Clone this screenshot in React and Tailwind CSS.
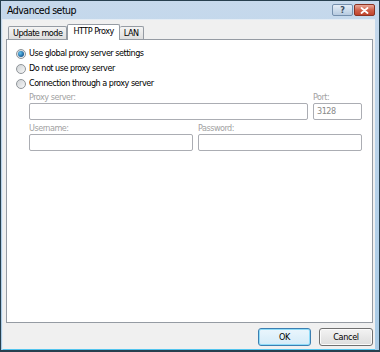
import React from "react";

function Radio({ checked, label }) {
  return (
    <div className="flex items-center h-[15px]">
      <span className="w-[10px] h-[10px] rounded-full border border-[#8f9499] bg-gradient-to-br from-[#cfd3d6] to-[#f7f7f7] flex items-center justify-center">
        {checked && (
          <span className="w-[6px] h-[6px] rounded-full bg-[radial-gradient(circle_at_35%_35%,#63c6f2,#1a5d97_70%)]" />
        )}
      </span>
      <span className="ml-[3px] text-[9px] tracking-[-0.5px] text-black leading-none">{label}</span>
    </div>
  );
}

function Field({ label, value, className }) {
  return (
    <div className={"flex flex-col " + (className || "")}>
      <span className="text-[9px] tracking-[-0.5px] text-[#a2a2a2] leading-[11px] h-[11px]">{label}</span>
      <div className="h-[17px] border border-[#abadb3] bg-white rounded-[2px] text-[9px] tracking-[-0.5px] text-[#8a8a8a] px-[3px] leading-[15px]">
        {value}
      </div>
    </div>
  );
}

export default function App() {
  return (
    <div
      className="w-[380px] h-[352px] bg-[#27404f] pt-[1px] px-[1px] pb-[2px] overflow-hidden"
      style={{ fontFamily: '"DejaVu Sans Condensed", "Liberation Sans", Arial, sans-serif' }}
    >
      <div className="w-full h-full bg-gradient-to-b from-[#c6d9ec] to-[#a9cbe6] flex flex-col pl-[1px] pr-[4px]">
        <div className="h-[18px] flex items-start justify-between pl-[5px]">
          <span className="text-[10.5px] tracking-[-0.5px] text-black leading-[18px]">Advanced setup</span>
          <div className="flex gap-[1px] pt-[3px]">
            <div className="w-[21px] h-[12px] rounded-[2px] border border-[#7590ad] bg-gradient-to-b from-[#e3edf7] to-[#b7cbe0] flex items-center justify-center text-[9px] font-bold text-[#3b4d60] leading-none">
              ?
            </div>
            <div className="w-[21px] h-[12px] rounded-[2px] border border-[#8b3322] bg-gradient-to-b from-[#e9a99a] via-[#d0614a] to-[#c0442c] flex items-center justify-center">
              <svg width="9" height="7" viewBox="0 0 9 7">
                <path d="M1.5 1 L7.5 6 M7.5 1 L1.5 6" stroke="#ffffff" strokeWidth="1.8" strokeLinecap="round" />
              </svg>
            </div>
          </div>
        </div>
        <div className="flex-1 bg-[#f0f0f0] border-l border-t border-[#e4ecf4] border-b border-b-[#52c4ee] flex flex-col pl-[3px] pr-[2px]">
          <div className="flex items-end h-[19px] pl-[2px]">
            <div className="h-[13px] px-[4px] border border-[#959ba3] border-b-0 bg-gradient-to-b from-[#f4f4f4] to-[#dedede] text-[9px] tracking-[-0.5px] leading-[12px] rounded-t-[2px]">
              Update mode
            </div>
            <div className="relative z-10 h-[16px] mb-[-1px] px-[5px] border border-[#959ba3] border-b-0 bg-white text-[9px] tracking-[-0.5px] leading-[13px] rounded-t-[2px]">
              HTTP Proxy
            </div>
            <div className="h-[13px] px-[4px] border border-[#959ba3] border-b-0 border-l-0 bg-gradient-to-b from-[#f4f4f4] to-[#dedede] text-[9px] tracking-[-0.5px] leading-[12px] rounded-t-[2px]">
              LAN
            </div>
          </div>
          <div className="h-[284px] bg-white border border-[#959ba3] flex flex-col pt-[6px] pl-[9px] pr-[10px]">
            <div className="flex flex-col">
              <Radio checked label="Use global proxy server settings" />
              <Radio label="Do not use proxy server" />
              <Radio label="Connection through a proxy server" />
            </div>
            <div className="pl-[13px] mt-[1px] flex flex-col gap-[3px]">
              <div className="flex gap-[5px]">
                <Field label="Proxy server:" className="flex-1" />
                <Field label="Port:" value="3128" className="w-[49px]" />
              </div>
              <div className="flex gap-[5px]">
                <Field label="Username:" className="flex-1" />
                <Field label="Password:" className="flex-1" />
              </div>
            </div>
          </div>
          <div className="flex justify-end gap-[8px] mt-[5px]">
            <button className="w-[53px] h-[18px] rounded-[3px] border border-[#3c7fb1] bg-gradient-to-b from-[#eaf6fd] to-[#d4ebf8] text-[9px] tracking-[-0.3px] text-black shadow-[inset_0_0_0_1px_#8fdcf9] leading-none">
              OK
            </button>
            <button className="w-[54px] h-[18px] rounded-[3px] border border-[#707070] bg-gradient-to-b from-[#f3f3f3] to-[#dddddd] text-[9px] tracking-[-0.3px] text-black shadow-[inset_0_0_0_1px_#fbfbfb] leading-none">
              Cancel
            </button>
          </div>
        </div>
      </div>
    </div>
  );
}
